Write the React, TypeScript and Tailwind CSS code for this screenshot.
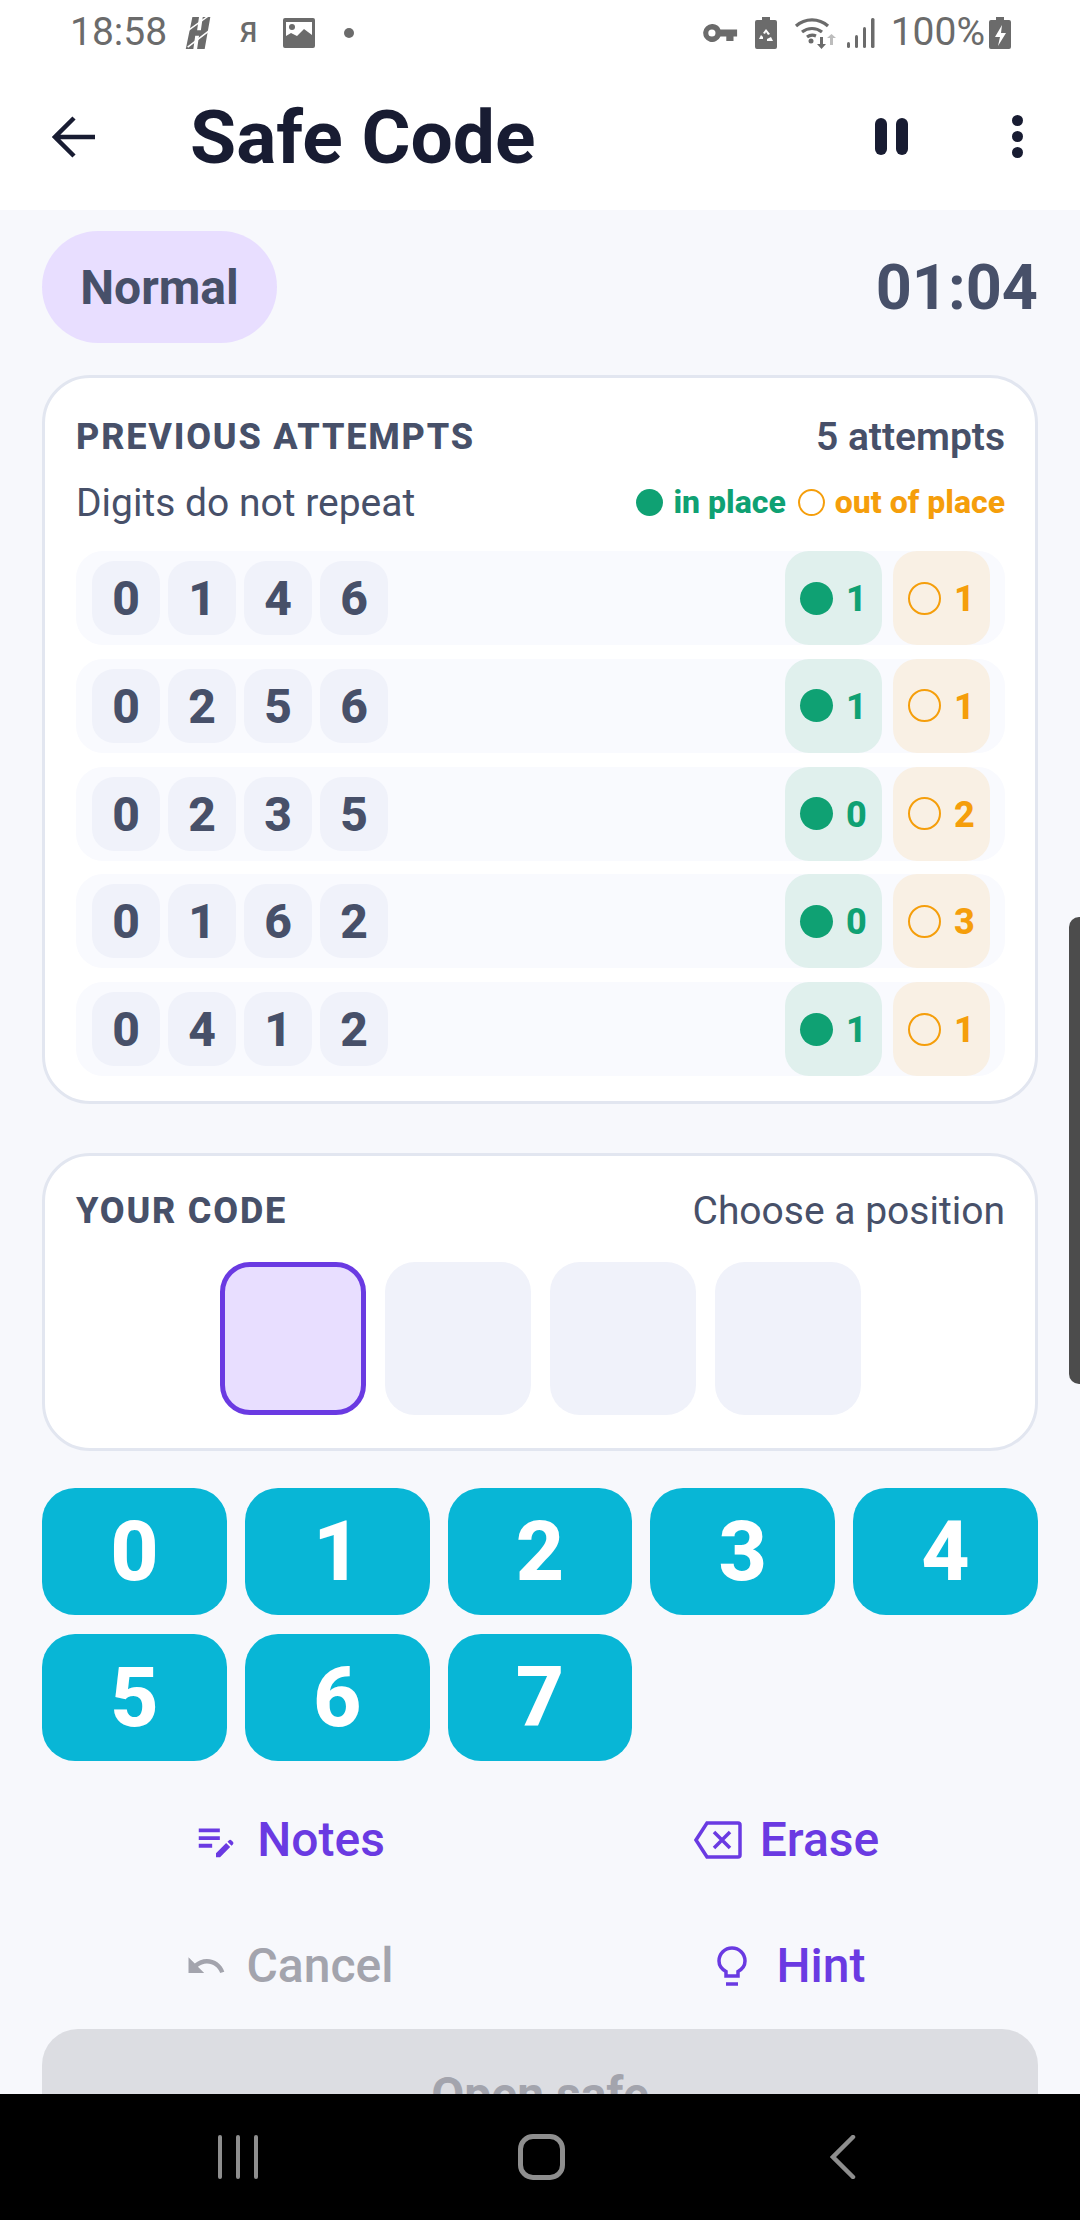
import React from "react";

const attempts = [
  { d: ["0", "1", "4", "6"], a: 1, b: 1 },
  { d: ["0", "2", "5", "6"], a: 1, b: 1 },
  { d: ["0", "2", "3", "5"], a: 0, b: 2 },
  { d: ["0", "1", "6", "2"], a: 0, b: 3 },
  { d: ["0", "4", "1", "2"], a: 1, b: 1 },
];

function Glyph({ w, h, children, vb, className }: { w: number; h: number; vb: string; children: React.ReactNode; className?: string }) {
  return (
    <svg width={w} height={h} viewBox={vb} fill="currentColor" className={className ?? "shrink-0"}>
      {children}
    </svg>
  );
}

function StatusBar() {
  return (
    <div className="flex h-[64px] items-center justify-between pl-[70px] pr-[69px] pt-[1px] text-[#6b6b6b]">
      <div className="flex items-center">
        <span className="w-[115px] text-[39px] leading-none">18:58</span>
        <Glyph w={28} h={34} vb="0 0 28 36">
          <path d="M7 1h7l-2 14h4l2-14h8l-6 34h-8l2-14H10L8 35H0z" />
          <path d="M0 17L24 0M2 33L28 13" stroke="#fff" strokeWidth="1.6" />
        </Glyph>
        <span className="ml-[27px] w-[20px] text-[28px] font-medium leading-none">Я</span>
        <Glyph w={32} h={30} vb="0 0 32 30" className="ml-[23px] shrink-0">
          <path fillRule="evenodd" d="M2 0h28a2 2 0 0 1 2 2v26a2 2 0 0 1-2 2H2a2 2 0 0 1-2-2V2a2 2 0 0 1 2-2zm1 4v14l5-3 6 3 7-7 8 6V4z" />
          <circle cx="9" cy="9" r="3" />
        </Glyph>
        <span className="ml-[29px] h-[10px] w-[10px] rounded-full bg-[#6b6b6b]" />
      </div>
      <div className="flex items-center">
        <Glyph w={38} h={18} vb="0 0 38 20">
          <path fillRule="evenodd" d="M10 0a10 10 0 0 1 9.500 6H38v8h-4v5h-8v-5h-6.500A10 10 0 1 1 10 0zm0 6a4 4 0 1 0 0 8 4 4 0 0 0 0-8z" />
        </Glyph>
        <Glyph w={22} h={32} vb="0 0 22 32" className="ml-[16px] shrink-0">
          <path fillRule="evenodd" d="M7 0h8v3h5a2 2 0 0 1 2 2v25a2 2 0 0 1-2 2H2a2 2 0 0 1-2-2V5a2 2 0 0 1 2-2h5zm4 12l-3 4 2 1 1-2 2 3 2-1zm-5 6l-2 4h4v-2zm6 4v2h6l-2-4z" />
        </Glyph>
        <Glyph w={42} h={32} vb="0 0 42 32" className="ml-[17px] shrink-0">
          <path d="M2 9a24 24 0 0 1 32 0M8 15a16 16 0 0 1 20 0M13 20a9 9 0 0 1 9-1" fill="none" stroke="currentColor" strokeWidth="3.200" />
          <circle cx="17" cy="24" r="2.500" />
          <path d="M26 20h3v7h3l-4.500 5-4.500-5h3z" />
          <path d="M36 28h3v-7h3l-4.500-4-4.500 4h3z" fill="#bdbdbd" />
        </Glyph>
        <Glyph w={28} h={30} vb="0 0 28 30" className="ml-[11px] shrink-0">
          <rect x="0" y="24" width="3" height="6" rx="1.500" />
          <rect x="8" y="17" width="3" height="13" rx="1.500" />
          <rect x="16" y="9" width="3" height="21" rx="1.500" />
          <rect x="24" y="0" width="3.500" height="30" rx="1.500" />
        </Glyph>
        <span className="ml-[16px] text-[39px] leading-none">100%</span>
        <Glyph w={22} h={32} vb="0 0 22 32" className="ml-[4px] shrink-0">
          <path fillRule="evenodd" d="M7 0h8v3h5a2 2 0 0 1 2 2v25a2 2 0 0 1-2 2H2a2 2 0 0 1-2-2V5a2 2 0 0 1 2-2h5zm6 8l-7 12h5l-2 9 8-13h-5z" />
        </Glyph>
      </div>
    </div>
  );
}

function Toolbar() {
  return (
    <div className="flex h-[146px] items-center pl-[52px] pr-[57px]">
      <svg width={44} height={42} viewBox="0 0 44 42" fill="none" stroke="#181c32" strokeWidth="4.500" className="shrink-0">
        <path d="M43 21H4M22 2L3 21l19 19" />
      </svg>
      <h1 className="ml-[94px] flex-1 text-[75px] font-bold leading-none text-[#181c32]">Safe Code</h1>
      <div className="mr-[104px] flex gap-[9px] pb-[2px]">
        <span className="h-[37px] w-[12px] rounded-full bg-[#181c32]" />
        <span className="h-[37px] w-[12px] rounded-full bg-[#181c32]" />
      </div>
      <div className="flex flex-col gap-[5px] pb-[2px]">
        <span className="h-[11px] w-[11px] rounded-full bg-[#181c32]" />
        <span className="h-[11px] w-[11px] rounded-full bg-[#181c32]" />
        <span className="h-[11px] w-[11px] rounded-full bg-[#181c32]" />
      </div>
    </div>
  );
}

function Row({ d, a, b }: { d: string[]; a: number; b: number }) {
  return (
    <div className="flex h-[94px] items-center justify-between rounded-[27px] bg-[#f9fafe] pl-[16px] pr-[15px]">
      <div className="flex gap-[8px]">
        {d.map((x, i) => (
          <span key={i} className="flex h-[74px] w-[68px] items-center justify-center rounded-[22px] bg-[#f0f2fa] pt-[2px] text-[48px] font-extrabold leading-none text-[#475069]">
            {x}
          </span>
        ))}
      </div>
      <div className="flex h-full gap-[11px]">
        <div className="flex w-[97px] items-center gap-[13px] rounded-[24px] bg-[#e0f0ed] pl-[15px]">
          <span className="h-[33px] w-[33px] rounded-full bg-[#0fa173]" />
          <span className="pt-[2px] text-[36px] font-extrabold leading-none text-[#0fa173]">{a}</span>
        </div>
        <div className="flex w-[97px] items-center gap-[13px] rounded-[24px] bg-[#f9f0e4] pl-[15px]">
          <span className="h-[33px] w-[33px] rounded-full border-[2.5px] border-[#f59e0b]" />
          <span className="pt-[2px] text-[36px] font-extrabold leading-none text-[#f59e0b]">{b}</span>
        </div>
      </div>
    </div>
  );
}

function Action({ label, muted, shape, children }: { label: string; muted?: boolean; shape: string; children: React.ReactNode }) {
  return (
    <button className={"flex h-[100px] items-center justify-center pt-[2px] text-[48px] font-medium leading-none " + shape + (muted ? " text-[#a3a4ad]" : " text-[#6a3ae2]")}>
      {children}
      <span>{label}</span>
    </button>
  );
}

export default function App() {
  return (
    <div className="relative flex h-[2220px] w-[1080px] flex-col overflow-hidden bg-[#f7f8fc] font-['Roboto',sans-serif]">
      <header className="h-[210px] shrink-0 bg-white">
        <StatusBar />
        <Toolbar />
      </header>

      <main className="flex min-h-0 flex-1 flex-col overflow-hidden px-[42px] pt-[21px]">
        <div className="flex items-center justify-between">
          <span className="flex h-[112px] w-[235px] items-center justify-center rounded-full bg-[#e8deff] pt-[2px] text-[48px] font-bold leading-none text-[#475069]">
            Normal
          </span>
          <span className="text-[63px] font-bold leading-none text-[#475069]">01:04</span>
        </div>

        <section className="mt-[32px] rounded-[48px] border-[3px] border-[#e2e6f0] bg-white pb-[25px] pl-[31px] pr-[30px] pt-[36px]">
          <div className="flex h-[44px] items-center justify-between pt-[2px] text-[#475069]">
            <h2 className="text-[36px] font-extrabold leading-none tracking-[1.8px]">PREVIOUS ATTEMPTS</h2>
            <span className="text-[39px] font-semibold leading-none">5 attempts</span>
          </div>
          <div className="mt-[23px] flex h-[44px] items-center justify-between">
            <span className="text-[39px] leading-none text-[#475069]">Digits do not repeat</span>
            <div className="flex items-center pb-[2px] text-[32px] font-extrabold leading-none">
              <span className="h-[27px] w-[27px] rounded-full bg-[#0fa173]" />
              <span className="ml-[10px] text-[#0fa173]">in place</span>
              <span className="ml-[12px] h-[27px] w-[27px] rounded-full border-[2.5px] border-[#f59e0b]" />
              <span className="ml-[10px] text-[#f59e0b]">out of place</span>
            </div>
          </div>
          <div className="mt-[26px] flex flex-col gap-[13.75px]">
            {attempts.map((r, i) => (
              <Row key={i} {...r} />
            ))}
          </div>
        </section>

        <section className="mt-[49px] rounded-[48px] border-[3px] border-[#e2e6f0] bg-white pb-[33px] pl-[31px] pr-[30px] pt-[32px]">
          <div className="flex h-[44px] items-center justify-between pt-[2px] text-[#475069]">
            <h2 className="text-[36px] font-extrabold leading-none tracking-[1.8px]">YOUR CODE</h2>
            <span className="text-[39px] leading-none">Choose a position</span>
          </div>
          <div className="mt-[30px] flex justify-center gap-[19px]">
            <div className="h-[153px] w-[146px] rounded-[30px] border-[5px] border-[#6a3ae2] bg-[#e8deff]" />
            <div className="h-[153px] w-[146px] rounded-[30px] bg-[#f0f2fa]" />
            <div className="h-[153px] w-[146px] rounded-[30px] bg-[#f0f2fa]" />
            <div className="h-[153px] w-[146px] rounded-[30px] bg-[#f0f2fa]" />
          </div>
        </section>

        <div className="mt-[37px] grid grid-cols-5 gap-x-[18px] gap-y-[19px]">
          {["0", "1", "2", "3", "4", "5", "6", "7"].map((k) => (
            <button key={k} className="flex h-[127px] items-center justify-center rounded-[33px] bg-[#08b6d6] text-[84px] font-extrabold leading-none text-white">
              {k}
            </button>
          ))}
        </div>

        <div className="mt-[28px] grid grid-cols-2 gap-x-[8px] gap-y-[26px]">
          <Action label="Notes" shape="gap-[18px]">
            <Glyph w={46} h={46} vb="0 0 24 24">
              <path d="M3 10h11v2H3zM3 6h11v2H3zM3 14h7v2H3zM18 12.900l.7-.7c.4-.4 1-.4 1.400 0l.7.7c.4.4.4 1 0 1.400l-.7.7zM17.300 13.600L12 18.900V21h2.100l5.300-5.300z" />
            </Glyph>
          </Action>
          <Action label="Erase" shape="gap-[18px] pr-[9px]">
            <svg width={48} height={38} viewBox="0 0 48 38" fill="none" stroke="currentColor" strokeWidth="3.500" className="shrink-0">
              <path d="M13 2h31a2 2 0 0 1 2 2v30a2 2 0 0 1-2 2H13L2 19zM20 11l16 16M36 11L20 27" />
            </svg>
          </Action>
          <Action label="Cancel" muted shape="gap-[20px]">
            <Glyph w={42} h={42} vb="0 0 24 24">
              <path d="M12.500 8c-2.650 0-5.050.99-6.900 2.600L2 7v9h9l-3.620-3.620c1.390-1.160 3.160-1.880 5.120-1.880 3.540 0 6.550 2.310 7.600 5.500l2.370-.78C21.080 11.030 17.150 8 12.500 8z" />
            </Glyph>
          </Action>
          <Action label="Hint" shape="gap-[20px]">
            <svg width={30} height={40} viewBox="0 0 30 40" fill="none" stroke="currentColor" strokeWidth="3.500" className="mr-[10px] shrink-0">
              <path d="M9 30v-4.500C4.500 23 2 19 2 15a13 13 0 0 1 26 0c0 4-2.500 8-7 10.500V30zM9 38h12" />
            </svg>
          </Action>
        </div>

        <button className="mt-[14px] h-[132px] shrink-0 rounded-[36px] bg-[#dcdde2] text-[48px] font-bold leading-none text-[#a3a4ad]">
          Open safe
        </button>
      </main>

      <nav className="flex h-[126px] shrink-0 items-center bg-black text-[#8e8e8e]">
        <div className="ml-[218px] flex gap-[14px]">
          <span className="h-[44px] w-[4px] rounded-full bg-[#8e8e8e]" />
          <span className="h-[44px] w-[4px] rounded-full bg-[#8e8e8e]" />
          <span className="h-[44px] w-[4px] rounded-full bg-[#8e8e8e]" />
        </div>
        <span className="ml-[260px] h-[46px] w-[47px] rounded-[15px] border-[5px] border-[#8e8e8e]" />
        <svg width={26} height={44} viewBox="0 0 26 44" fill="none" stroke="currentColor" strokeWidth="4.500" strokeLinecap="round" className="ml-[265px]">
          <path d="M23 2L3 22l20 20" />
        </svg>
      </nav>

      <div className="absolute right-0 top-[917px] h-[467px] w-[11px] rounded-l-[10px] bg-[#4c4c4c]" />
    </div>
  );
}
